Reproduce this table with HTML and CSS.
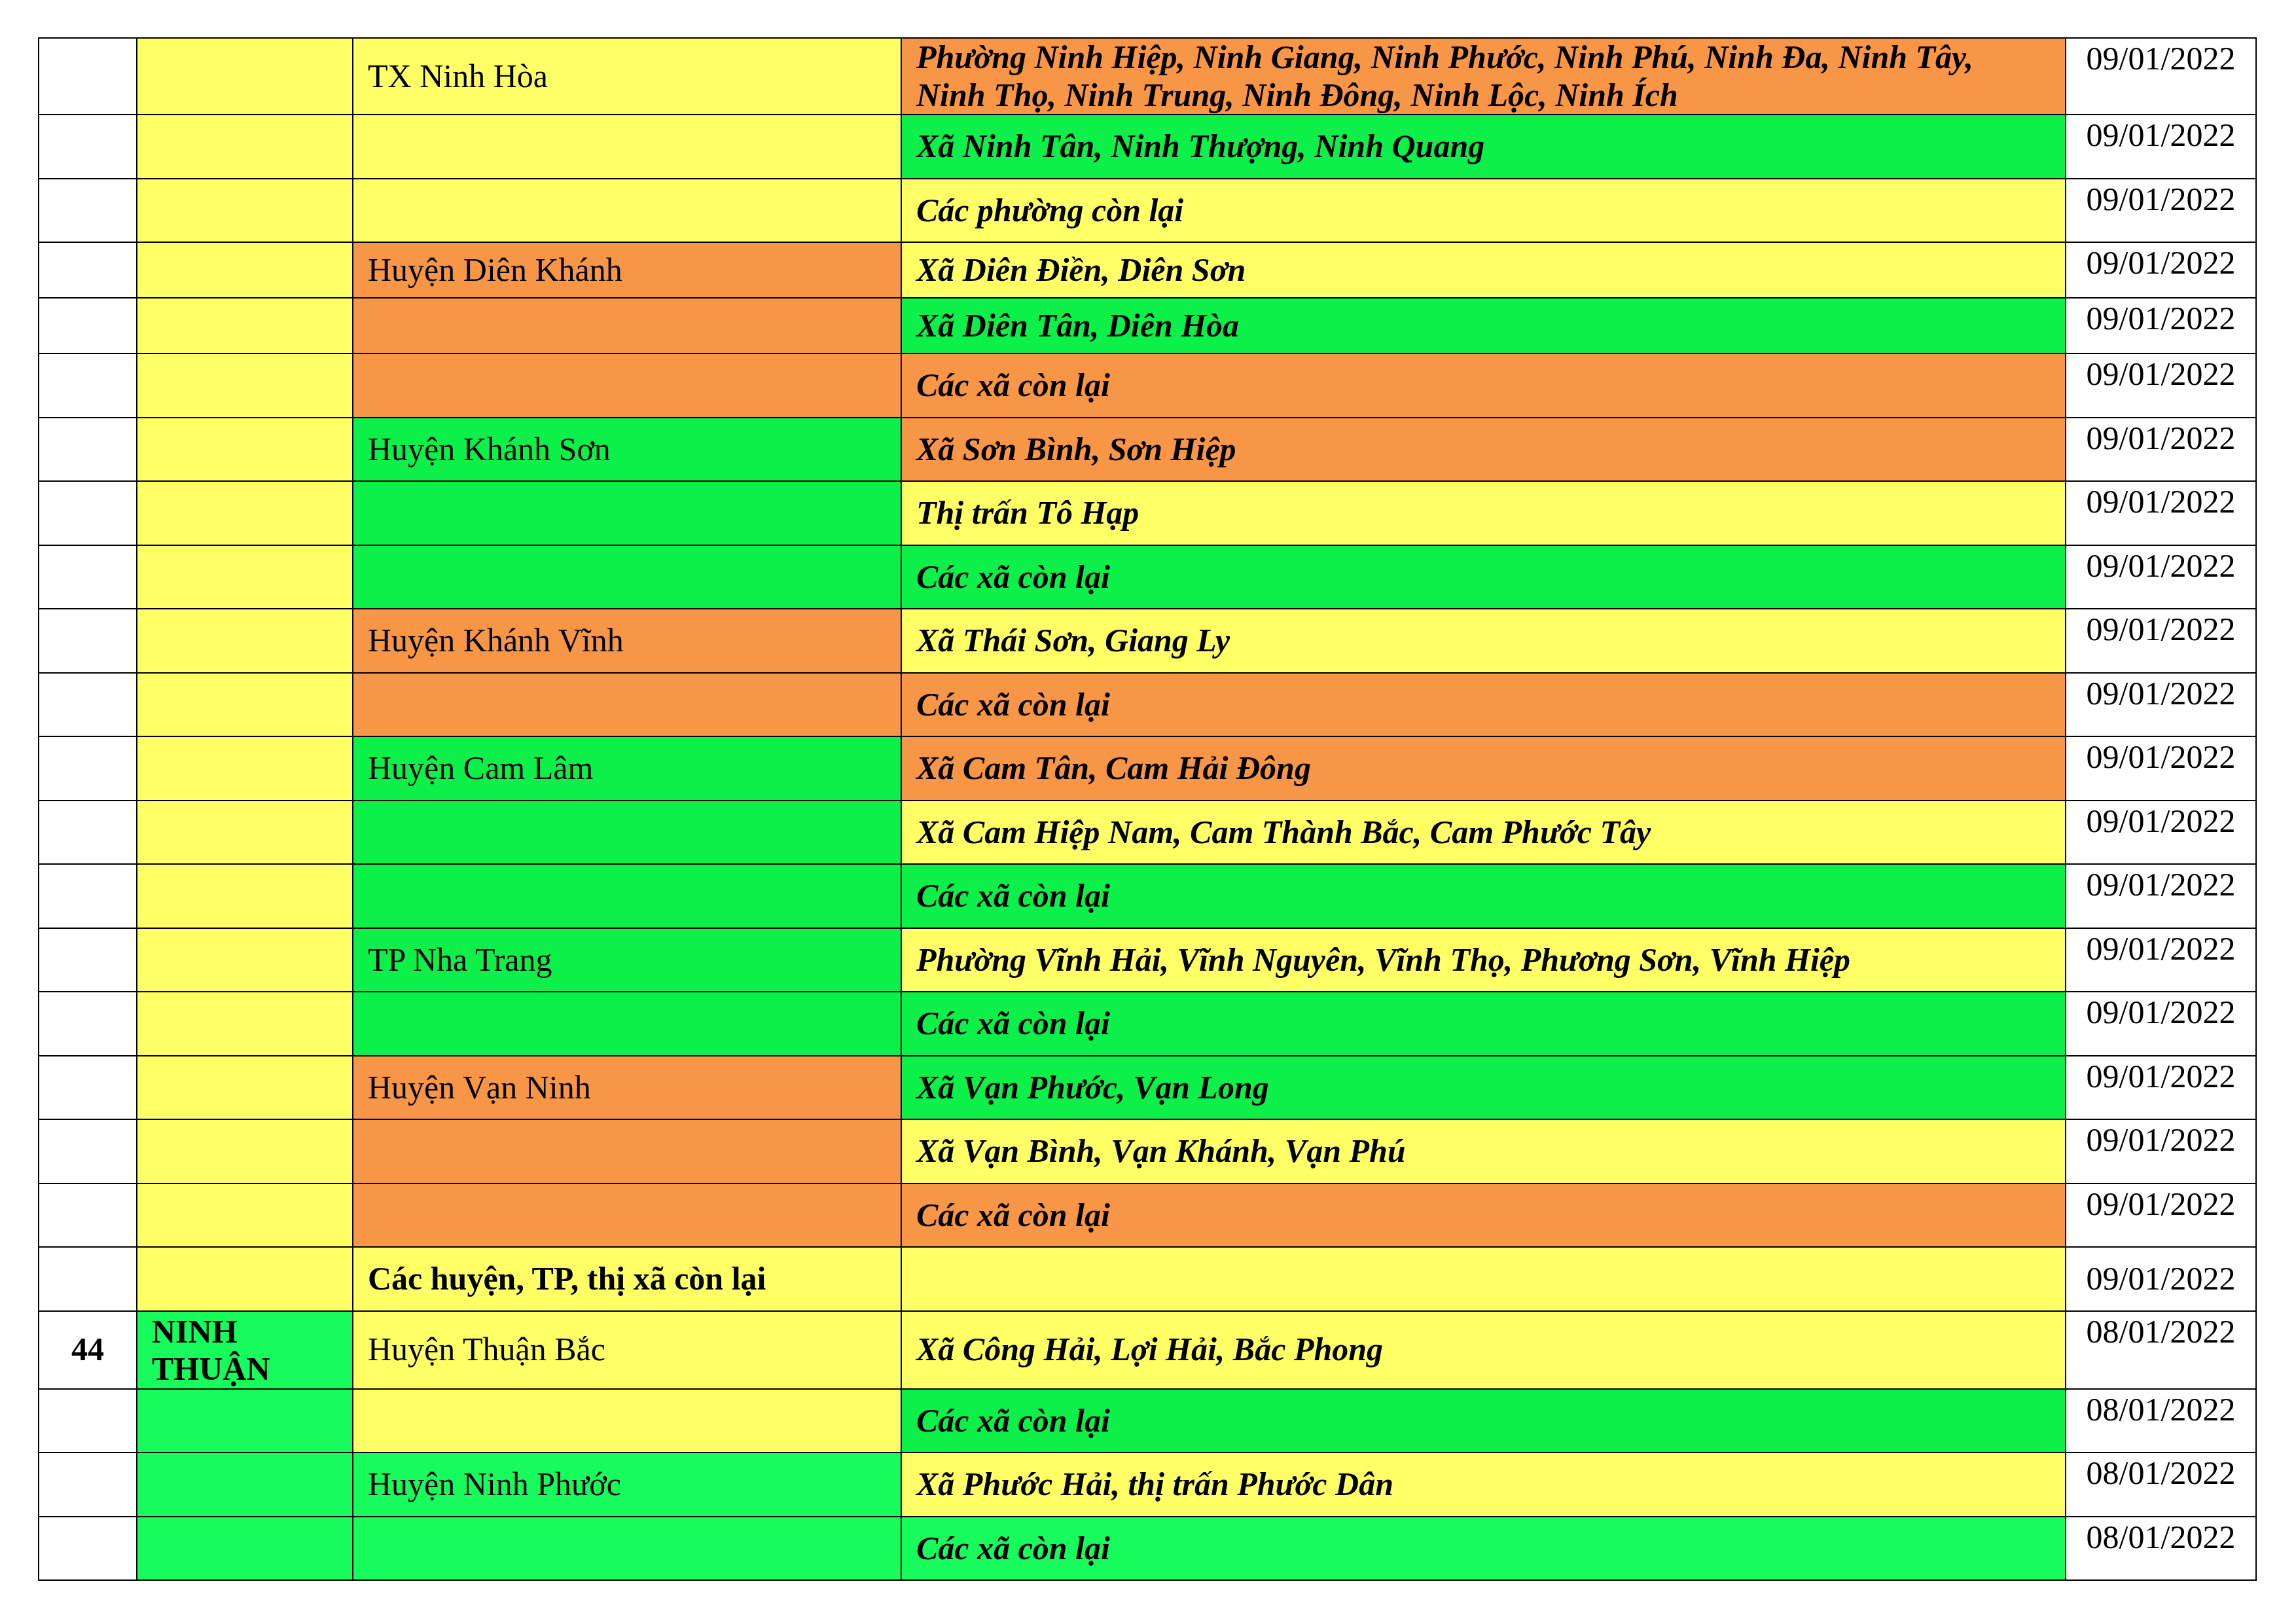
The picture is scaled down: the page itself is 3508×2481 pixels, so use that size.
FILE: index.html
```html
<!DOCTYPE html>
<html lang="vi">
<head>
<meta charset="utf-8">
<title>Danh sách cấp độ dịch</title>
<link rel="stylesheet" href="styles.css">
</head>
<body>
<div class="sheet">
<table class="grid">
  <colgroup>
    <col class="c-stt">
    <col class="c-tinh">
    <col class="c-huyen">
    <col class="c-xa">
    <col class="c-ngay">
  </colgroup>
  <tbody>
    <tr class="tall">
      <td></td><td class="y"></td>
      <td class="y">TX Ninh Hòa</td>
      <td class="o it">Phường Ninh Hiệp, Ninh Giang, Ninh Phước, Ninh Phú, Ninh Đa, Ninh Tây,<br>Ninh Thọ, Ninh Trung, Ninh Đông, Ninh Lộc, Ninh Ích</td>
      <td class="date">09/01/2022</td>
    </tr>
    <tr>
      <td></td><td class="y"></td><td class="y"></td>
      <td class="g1 it">Xã Ninh Tân, Ninh Thượng, Ninh Quang</td>
      <td class="date">09/01/2022</td>
    </tr>
    <tr>
      <td></td><td class="y"></td><td class="y"></td>
      <td class="y it">Các phường còn lại</td>
      <td class="date">09/01/2022</td>
    </tr>
    <tr class="short">
      <td></td><td class="y"></td>
      <td class="o">Huyện Diên Khánh</td>
      <td class="y it">Xã Diên Điền, Diên Sơn</td>
      <td class="date">09/01/2022</td>
    </tr>
    <tr class="short">
      <td></td><td class="y"></td><td class="o"></td>
      <td class="g1 it">Xã Diên Tân, Diên Hòa</td>
      <td class="date">09/01/2022</td>
    </tr>
    <tr>
      <td></td><td class="y"></td><td class="o"></td>
      <td class="o it">Các xã còn lại</td>
      <td class="date">09/01/2022</td>
    </tr>
    <tr>
      <td></td><td class="y"></td>
      <td class="g1">Huyện Khánh Sơn</td>
      <td class="o it">Xã Sơn Bình, Sơn Hiệp</td>
      <td class="date">09/01/2022</td>
    </tr>
    <tr>
      <td></td><td class="y"></td><td class="g1"></td>
      <td class="y it">Thị trấn Tô Hạp</td>
      <td class="date">09/01/2022</td>
    </tr>
    <tr>
      <td></td><td class="y"></td><td class="g1"></td>
      <td class="g1 it">Các xã còn lại</td>
      <td class="date">09/01/2022</td>
    </tr>
    <tr>
      <td></td><td class="y"></td>
      <td class="o">Huyện Khánh Vĩnh</td>
      <td class="y it">Xã Thái Sơn, Giang Ly</td>
      <td class="date">09/01/2022</td>
    </tr>
    <tr>
      <td></td><td class="y"></td><td class="o"></td>
      <td class="o it">Các xã còn lại</td>
      <td class="date">09/01/2022</td>
    </tr>
    <tr>
      <td></td><td class="y"></td>
      <td class="g1">Huyện Cam Lâm</td>
      <td class="o it">Xã Cam Tân, Cam Hải Đông</td>
      <td class="date">09/01/2022</td>
    </tr>
    <tr>
      <td></td><td class="y"></td><td class="g1"></td>
      <td class="y it">Xã Cam Hiệp Nam, Cam Thành Bắc, Cam Phước Tây</td>
      <td class="date">09/01/2022</td>
    </tr>
    <tr>
      <td></td><td class="y"></td><td class="g1"></td>
      <td class="g1 it">Các xã còn lại</td>
      <td class="date">09/01/2022</td>
    </tr>
    <tr>
      <td></td><td class="y"></td>
      <td class="g1">TP Nha Trang</td>
      <td class="y it">Phường Vĩnh Hải, Vĩnh Nguyên, Vĩnh Thọ, Phương Sơn, Vĩnh Hiệp</td>
      <td class="date">09/01/2022</td>
    </tr>
    <tr>
      <td></td><td class="y"></td><td class="g1"></td>
      <td class="g1 it">Các xã còn lại</td>
      <td class="date">09/01/2022</td>
    </tr>
    <tr>
      <td></td><td class="y"></td>
      <td class="o">Huyện Vạn Ninh</td>
      <td class="g1 it">Xã Vạn Phước, Vạn Long</td>
      <td class="date">09/01/2022</td>
    </tr>
    <tr>
      <td></td><td class="y"></td><td class="o"></td>
      <td class="y it">Xã Vạn Bình, Vạn Khánh, Vạn Phú</td>
      <td class="date">09/01/2022</td>
    </tr>
    <tr>
      <td></td><td class="y"></td><td class="o"></td>
      <td class="o it">Các xã còn lại</td>
      <td class="date">09/01/2022</td>
    </tr>
    <tr>
      <td></td><td class="y"></td>
      <td class="y b">Các huyện, TP, thị xã còn lại</td>
      <td class="y"></td>
      <td class="date mid">09/01/2022</td>
    </tr>
    <tr class="tall">
      <td class="num b">44</td>
      <td class="g2 b prov">NINH THUẬN</td>
      <td class="y">Huyện Thuận Bắc</td>
      <td class="y it">Xã Công Hải, Lợi Hải, Bắc Phong</td>
      <td class="date">08/01/2022</td>
    </tr>
    <tr>
      <td></td><td class="g2"></td><td class="y"></td>
      <td class="g1 it">Các xã còn lại</td>
      <td class="date">08/01/2022</td>
    </tr>
    <tr>
      <td></td><td class="g2"></td>
      <td class="g2">Huyện Ninh Phước</td>
      <td class="y it">Xã Phước Hải, thị trấn Phước Dân</td>
      <td class="date">08/01/2022</td>
    </tr>
    <tr>
      <td></td><td class="g2"></td><td class="g2"></td>
      <td class="g2 it">Các xã còn lại</td>
      <td class="date">08/01/2022</td>
    </tr>
  </tbody>
</table>
</div>
</body>
</html>
```

FILE: styles.css
```css
html, body {
  margin: 0;
  padding: 0;
  background: #ffffff;
}

body {
  font-family: "Liberation Serif", "Times New Roman", serif;
  font-size: 50px;
  line-height: 1.15;
  color: #000000;
}

.sheet {
  padding: 57px 0 0 58px;
}

.grid {
  border-collapse: collapse;
  table-layout: fixed;
  width: 3390px;
}

.c-stt { width: 150px; }
.c-tinh { width: 330px; }
.c-huyen { width: 838px; }
.c-xa { width: 1779px; }
.c-ngay { width: 291px; }

.grid tr { height: 97.5px; }
.grid tr.tall { height: 116px; }
.grid tr.short { height: 85px; }

.grid td {
  border: 2px solid #000000;
  padding: 0 22px;
  vertical-align: middle;
  text-align: left;
  background: #ffffff;
}

.grid td.y { background: #ffff66; }
.grid td.o { background: #f79646; }
.grid td.g1 { background: #0df049; }
.grid td.g2 { background: #17fb5d; }

.it {
  font-weight: bold;
  font-style: italic;
}

.b { font-weight: bold; }

.grid td.date {
  text-align: center;
  vertical-align: top;
  padding: 2px 0 0 0;
}

.grid td.date.mid { vertical-align: middle; padding: 0; }

.grid td.num {
  text-align: center;
  padding: 0;
}

.grid td.prov {
  vertical-align: top;
  padding-top: 2px;
}
```
